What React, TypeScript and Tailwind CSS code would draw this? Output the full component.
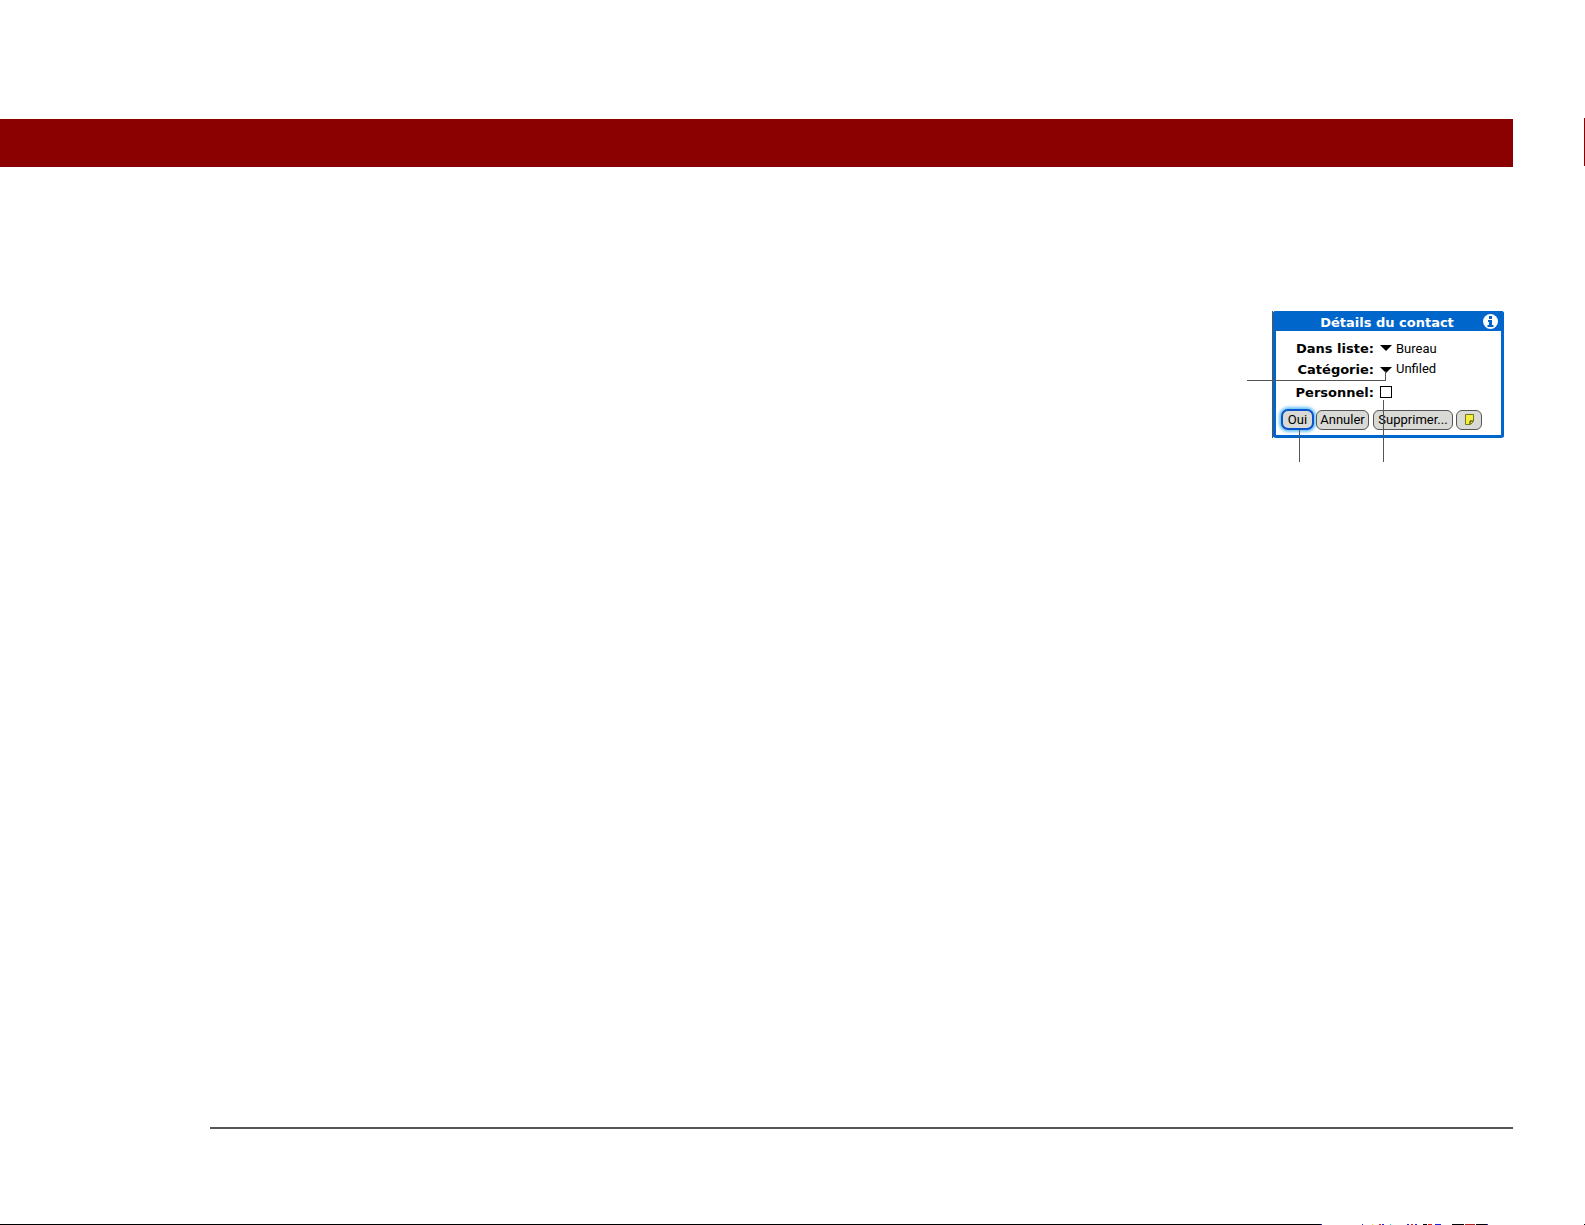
import React from "react";

const labelClass = "w-[98px] text-right font-['DejaVu_Sans'] font-bold text-[13px] leading-none text-black";
const valueClass = "font-['Roboto'] text-[13px] leading-none text-black";
const buttonClass = "flex items-center justify-center h-5 rounded-[6px] border border-[#555] bg-[#d9d9d5] font-['Roboto'] text-[13px] leading-none text-black";

// what is left of the next page's text, cut off by the bottom edge
const specks: [number, number, string][] = [
    [0, 1324, "bg-black"], [0, 1, "bg-[#2222dd]"], [40, 1, "bg-[#2222dd]"], [9, 1, "bg-[#eedd22]"],
    [6, 2, "bg-[#dd2222]"], [1, 2, "bg-[#2222dd]"], [6, 1, "bg-[#22dddd]"], [16, 2, "bg-[#2222dd]"],
    [2, 2, "bg-[#dd2222]"], [2, 2, "bg-[#2222dd]"], [6, 4, "bg-black"], [1, 4, "bg-[#dd2222]"],
    [3, 6, "bg-[#2222dd]"], [11, 12, "bg-black"], [1, 10, "bg-[#aa2222]"], [1, 11, "bg-black"],
    [0, 1, "bg-[#2222dd]"], [96, 1, "bg-black"],
];

function Arrow() {
    return (
        <svg width="12" height="6" viewBox="0 0 12 6" className="shrink-0">
            <path d="M0 0H12L6 6Z" fill="#000" />
        </svg>
    );
}

function InfoIcon() {
    return (
        <svg width="15" height="15" viewBox="0 0 15 15">
            <circle cx="7.5" cy="7.5" r="7.5" fill="#fff" />
            <rect x="6" y="2" width="3" height="3" fill="#0066cc" />
            <path d="M5 6H9V11H10.5V13H4.5V11H6V8H5Z" fill="#0066cc" />
        </svg>
    );
}

function NoteIcon() {
    return (
        <svg width="9" height="11" viewBox="0 0 9 11">
            <path d="M0.5 0.5H8.5V7.5L5.5 10.5H0.5Z" fill="#f4ee3c" stroke="#77761c" />
            <path d="M8 7H5V10" fill="none" stroke="#222" />
        </svg>
    );
}

function ContactDialog() {
    return (
        <div className="relative w-[231px] h-[127px] ml-[1273px] mt-[144px]">
            <div className="flex flex-col w-full h-full rounded-[3px] border-x-[3px] border-b-[3px] border-[#0066cc] bg-white">
                <div className="relative flex items-center justify-center h-5 -mx-[3px] pt-[2px] pr-[3px] bg-[#0066cc] rounded-t-[3px]">
                    <span className="font-['DejaVu_Sans'] font-bold text-[13px] leading-none text-white">Détails du contact</span>
                    <div className="absolute right-[6px] top-[3px]"><InfoIcon /></div>
                </div>
                <div className="flex items-center h-[22px] mt-[6px]">
                    <span className={labelClass}>Dans liste:</span>
                    <div className="ml-[6px]"><Arrow /></div>
                    <span className={`ml-[4px] ${valueClass}`}>Bureau</span>
                </div>
                <div className="flex items-center h-[21px]">
                    <span className={labelClass}>Catégorie:</span>
                    <div className="ml-[6px]"><Arrow /></div>
                    <span className={`ml-[4px] -mt-[3px] ${valueClass}`}>Unfiled</span>
                </div>
                <div className="flex items-center h-[24px]">
                    <span className={labelClass}>Personnel:</span>
                    <div className="ml-[6px] w-3 h-3 border border-black bg-white"></div>
                </div>
                <div className="flex items-center gap-[3px] mt-[5px] ml-[5px]">
                    <button className="flex items-center justify-center w-[33px] h-[21px] rounded-[7px] border-2 border-[#0a55cc] bg-[#d9d9d5] font-['Roboto'] text-[13px] leading-none text-black shadow-[0_0_3px_2px_#6fc4f5]">Oui</button>
                    <button className={`${buttonClass} w-[53px] -ml-px`}>Annuler</button>
                    <button className={`${buttonClass} w-[80px] ml-px`}>Supprimer...</button>
                    <button className={`${buttonClass} w-[26px]`}><NoteIcon /></button>
                </div>
            </div>
            {/* leader lines */}
            <div className="absolute -left-px top-0 w-px h-[127px] bg-[#555]"></div>
            <div className="absolute -left-[26px] top-[69px] w-[139px] h-px bg-[#555]"></div>
            <div className="absolute left-[112px] top-[60px] w-px h-[10px] bg-[#555]"></div>
            <div className="absolute left-[110px] top-[89px] w-px h-[62px] bg-[#555]"></div>
            <div className="absolute left-[26px] top-[119px] w-px h-[32px] bg-[#555]"></div>
        </div>
    );
}

export default function App() {
    return (
        <div className="flex flex-col w-[1585px] h-[1225px] overflow-hidden bg-white">
            <div className="flex h-[49px] mt-[118px]">
                <div className="w-[1513px] h-[48px] mt-px bg-[#8b0000]"></div>
                <div className="w-px h-[48px] ml-auto bg-[#8b0000]"></div>
            </div>
            <ContactDialog />
            <div className="w-[1303px] h-[2px] ml-[210px] mt-auto mb-[95px] bg-[#555]"></div>
            <div className="flex h-px">
                {specks.map(([gap, width, color], i) =>
                    <div key={i} className={color} style={{marginLeft: gap, width}}></div>
                )}
            </div>
        </div>
    );
}
